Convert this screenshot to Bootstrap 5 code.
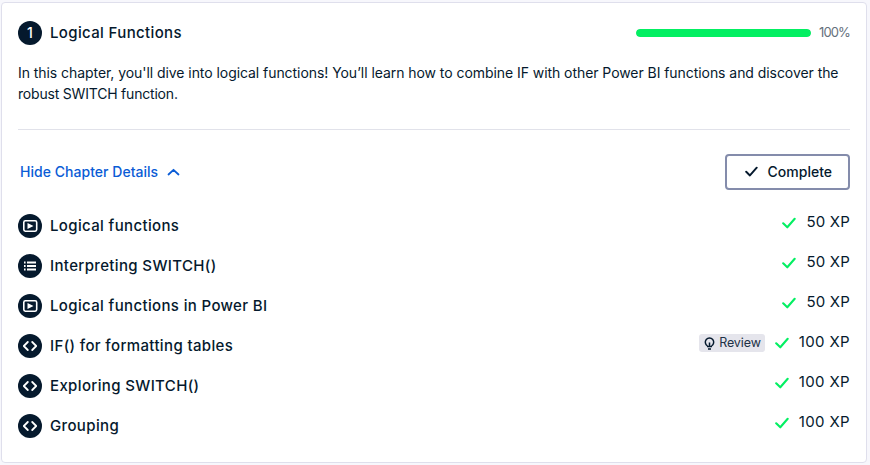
<!DOCTYPE html>
<html lang="en">
<head>
<meta charset="utf-8">
<title>Logical Functions</title>
<meta name="viewport" content="width=device-width, initial-scale=1">
<link href="https://cdn.jsdelivr.net/npm/bootstrap@5.3.0/dist/css/bootstrap.min.css" rel="stylesheet">
<style>
body{background:#f7f7fc;color:#05192d;font-family:Inter,"Liberation Sans",sans-serif;font-size:16px;line-height:24px;overflow:hidden}
.chapter{width:866px;height:461px;margin:2px 0 0 1px;border:1px solid #dfdfec;border-radius:4px;background:#fff;color:#05192d;padding:0 16px}
.chapter-head{padding-top:18px;height:42px}
.disc{width:24px;height:24px;flex:none;background:#05192d;color:#fff}
.disc-num{font-size:14px;font-weight:500;line-height:24px}
.item-title{font-size:15px;font-weight:550;line-height:24px;margin:0;white-space:nowrap;letter-spacing:.36px}
.meter{width:175px;height:8px;--bs-progress-bg:#e8e8ee;--bs-progress-bar-bg:#03ef62;border-radius:4px}
.meter .progress-bar{border-radius:4px}
.pct{width:39px;padding-left:8px;font-size:13px;color:#65707c;white-space:nowrap;letter-spacing:-.9px;margin-top:-2px}
.intro{font-size:14px;line-height:21px;margin:17px 0 0;white-space:nowrap;height:42px;letter-spacing:-.06px}
.second{letter-spacing:-.2px}
.rule{height:1px;background:#e1e2ea;margin-top:25px}
.actions{margin-top:24px;height:36px}
.toggle{color:#0a5cd6;font-size:14px;font-weight:550;padding:0 0 0 2px;border:0;line-height:24px;letter-spacing:.03px}
.complete{width:125px;height:36px;border:2px solid #848cab;border-radius:4px;color:#05192d;font-size:14px;font-weight:550;padding:0 16px 1px 18px;line-height:22px;letter-spacing:0}
.lessons{margin-top:24px}
.lesson{height:24px;margin-bottom:16px}
.xp{font-size:15px;margin-top:-8px;letter-spacing:.2px}
.xp-wide{letter-spacing:.36px}
.tick-ok{color:#03ef62;margin:2px 10px 0 0}
.review{width:66px;height:18px;margin:2px 10px 0 0;background:#e5e5ec;border-radius:3px;font-size:12.5px;line-height:17px;padding:0 4px 0 5px;color:#213147;letter-spacing:-.1px}
.review-word{margin-top:-2px}
</style>
</head>
<body>
<svg class="d-none" xmlns="http://www.w3.org/2000/svg">
<symbol id="video" viewBox="0 0 24 24"><rect x="5.800" y="6.800" width="12.900" height="10.400" rx="1.600" fill="none" stroke="#fff" stroke-width="1.600"/><path d="M9.500 9v6l6-3z" fill="#fff"/></symbol>
<symbol id="list" viewBox="0 0 24 24"><path d="M6 8.500h1.600M9 8.500h9M6 12h1.600M9 12h9M6 15.500h1.600M9 15.500h9" stroke="#fff" stroke-width="1.900"/></symbol>
<symbol id="code" viewBox="0 0 24 24"><path d="M9.800 8l-4 4 4 4M14.200 8l4 4-4 4" fill="none" stroke="#fff" stroke-width="1.800" stroke-linecap="round" stroke-linejoin="round"/></symbol>
<symbol id="tick" viewBox="0 0 14 12"><path d="M1.200 6.300l4.100 4L12.700 1.800" fill="none" stroke="currentColor" stroke-width="2.100" stroke-linecap="round" stroke-linejoin="round"/></symbol>
</svg>
<main class="chapter">
  <header class="chapter-head d-flex align-items-center">
    <span class="disc disc-num rounded-circle text-center me-2">1</span>
    <h1 class="item-title">Logical Functions</h1>
    <div class="progress meter ms-auto"><div class="progress-bar w-100"></div></div>
    <span class="pct">100%</span>
  </header>
  <p class="intro">In this chapter, you'll dive into logical functions! You’ll learn how to combine IF with other Power BI functions and discover the<br><span class="second">robust SWITCH function.</span></p>
  <div class="rule"></div>
  <div class="actions d-flex align-items-center justify-content-between">
    <button class="btn toggle d-flex align-items-center"><span>Hide Chapter Details</span><svg class="ms-2" width="14" height="10" viewBox="0 0 14 10"><path d="M2.500 7.500L7.500 2.800l5 4.700" fill="none" stroke="currentColor" stroke-width="1.800" stroke-linecap="round" stroke-linejoin="round"/></svg></button>
    <button class="btn complete d-flex align-items-center justify-content-between"><svg width="13" height="11"><use href="#tick"/></svg><span>Complete</span></button>
  </div>
  <ul class="lessons list-unstyled mb-0" id="lessons"></ul>
</main>
<script src="https://cdn.jsdelivr.net/npm/bootstrap@5.3.0/dist/js/bootstrap.bundle.min.js"></script>
<script>
const lessons=[["video","Logical functions",50],["list","Interpreting SWITCH()",50],["video","Logical functions in Power BI",50],["code","IF() for formatting tables",100,true],["code","Exploring SWITCH()",100],["code","Grouping",100]];
const review=`<span class="review d-flex align-items-center justify-content-between"><svg width="11" height="13" viewBox="0 0 11 13"><path d="M3.400 8.900A4.200 4.200 0 1 1 7.600 8.900M5.500 5.500V9.500M3 9.500h5M4 12h3" fill="none" stroke="#05192d" stroke-width="1.500"/></svg><span class="review-word">Review</span></span>`;
document.getElementById("lessons").innerHTML=lessons.map(([icon,title,xp,r])=>`<li class="lesson d-flex align-items-center"><svg class="disc rounded-circle me-2"><use href="#${icon}"/></svg><span class="item-title">${title}</span><span class="xp d-flex align-items-center ms-auto">${r?review:""}<svg class="tick-ok" width="14" height="12"><use href="#tick"/></svg><span class="${xp>99?"xp-wide":""}">${xp} XP</span></span></li>`).join("");
</script>
</body>
</html>
